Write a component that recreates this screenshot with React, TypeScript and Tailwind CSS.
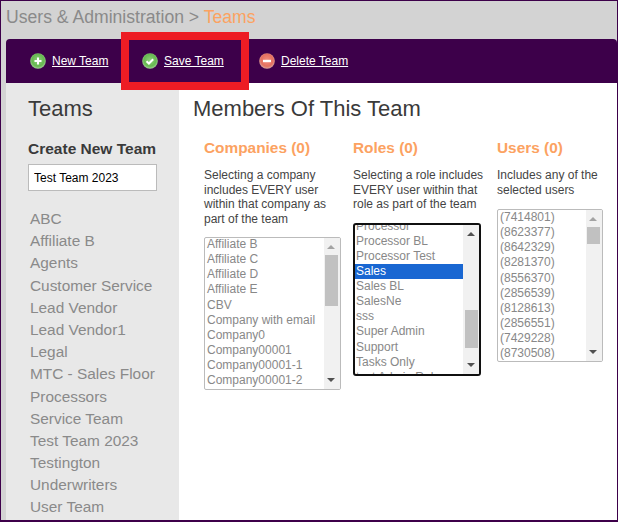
const font = "font-['Liberation_Sans',Arial,sans-serif]";

const teams = ["ABC", "Affiliate B", "Agents", "Customer Service", "Lead Vendor", "Lead Vendor1", "Legal", "MTC - Sales Floor", "Processors", "Service Team", "Test Team 2023", "Testington", "Underwriters", "User Team"];
const companies = ["Affiliate B", "Affiliate C", "Affiliate D", "Affiliate E", "CBV", "Company with email", "Company0", "Company00001", "Company00001-1", "Company00001-2"];
const roles = ["Processor", "Processor BL", "Processor Test", "Sales", "Sales BL", "SalesNe", "sss", "Super Admin", "Support", "Tasks Only", "test Admin Role"];
const users = ["(7414801)", "(8623377)", "(8642329)", "(8281370)", "(8556370)", "(2856539)", "(8128613)", "(2856551)", "(7429228)", "(8730508)"];

function ActionIcon({ kind }: { kind: "plus" | "check" | "minus" }) {
  const red = kind === "minus";
  return (
    <svg width="16" height="16" viewBox="0 0 16 16" className="shrink-0">
      <defs>
        <radialGradient id={`glow-${kind}`} cx="50%" cy="45%" r="55%">
          <stop offset="0%" stopColor={red ? "#f2907f" : "#8fd07c"} />
          <stop offset="70%" stopColor={red ? "#e4705f" : "#66b850"} />
          <stop offset="100%" stopColor={red ? "#d9a79f" : "#a4cf99"} />
        </radialGradient>
      </defs>
      <circle cx="8" cy="8" r="7.8" fill={`url(#glow-${kind})`} />
      {kind === "plus" && <path d="M8 4.5v7M4.5 8h7" stroke="#fff" strokeWidth="2" />}
      {kind === "check" && <path d="M4.5 8.3l2.4 2.2 4.3-4.3" stroke="#fff" strokeWidth="2" fill="none" />}
      {kind === "minus" && <path d="M4 8h8" stroke="#fff" strokeWidth="2.4" />}
    </svg>
  );
}

function ActionLink({ kind, label }: { kind: "plus" | "check" | "minus"; label: string }) {
  return (
    <a className="flex items-center gap-[6px] text-[12px] text-white underline cursor-pointer">
      <ActionIcon kind={kind} />
      {label}
    </a>
  );
}

function ListBox({ items, selected, thumbTop, thumbHeight, focused, listClass, className }: {
  items: string[];
  selected?: string;
  thumbTop: number;
  thumbHeight: number;
  focused?: boolean;
  listClass?: string;
  className: string;
}) {
  return (
    <div className={`flex overflow-hidden bg-white ${focused ? "border-2 border-[#101010] rounded-[3px]" : "border border-[#bbbbbb] rounded-[2px]"} ${className}`}>
      <div className={`flex-1 min-w-0 overflow-hidden ${listClass ?? ""}`}>
        {items.map((item) => (
          <div key={item} className={`h-[15.15px] leading-[15px] text-[12px] whitespace-nowrap ${focused ? "pl-[1px]" : "pl-[2px]"} ${item === selected ? "bg-[#1967d2] text-white" : "text-[#888888]"}`}>
            {item}
          </div>
        ))}
      </div>
      <div className="w-[16px] shrink-0 bg-[#f1f1f1] relative">
        <div className={`absolute top-[7px] w-0 h-0 border-x-[4px] border-x-transparent border-b-[4px] ${focused ? "left-[4px] border-b-[#505050]" : "left-[3px] border-b-[#a3a3a3]"}`} />
        <div className={`absolute w-[13px] bg-[#c1c1c1] ${focused ? "left-[2px]" : "left-[1px]"}`} style={{ top: thumbTop, height: thumbHeight }} />
        <div className={`absolute bottom-[7px] w-0 h-0 border-x-[4px] border-x-transparent border-t-[4px] border-t-[#505050] ${focused ? "left-[4px]" : "left-[3px]"}`} />
      </div>
    </div>
  );
}

export default function App() {
  return (
    <div className={`${font} h-[522px] w-[618px] overflow-hidden bg-[#d3d3d3] border border-b-2 border-[#3d004a] pl-[5px]`}>
      <h2 className="h-[38px] pt-[6px] text-[17.6px] leading-[20px] text-[#8a8a8a]">
        Users &amp; Administration &gt; <span className="text-[#fca261]">Teams</span>
      </h2>
      <div className="h-[44px] rounded-t-[4px] bg-[#3d004a] flex items-center pl-[24px]">
        <div className="w-[91px]"><ActionLink kind="plus" label="New Team" /></div>
        {/* highlight box hangs over the panel below */}
        <div className="relative z-10 w-[128px] h-[58px] shrink-0 border-[8px] border-[#ed1c24] flex items-center pl-[13px]">
          <ActionLink kind="check" label="Save Team" />
        </div>
        <div className="ml-[10px]"><ActionLink kind="minus" label="Delete Team" /></div>
      </div>
      <div className="flex h-[438px] bg-white">
        <aside className="w-[173px] shrink-0 bg-[#e8e8e8] pl-[22px]">
          <h1 className="mt-[13px] text-[22px] leading-[26px] text-[#3a3a3a]">Teams</h1>
          <h3 className="mt-[18px] text-[15.5px] leading-[18px] font-bold text-[#3a3a3a] whitespace-nowrap">Create New Team</h3>
          <input readOnly value="Test Team 2023" className="mt-[6px] w-[129px] h-[27px] px-[5px] border border-[#bbbbbb] bg-white text-[12px] text-black outline-none" />
          <ul className="mt-[17px] pl-[2px]">
            {teams.map((team) => (
              <li key={team} className="h-[22.2px] leading-[22px] text-[15.4px] text-[#8a8a8a] whitespace-nowrap">{team}</li>
            ))}
          </ul>
        </aside>
        <main className="flex-1 min-w-0 pl-[14px]">
          <h1 className="mt-[13px] text-[22px] leading-[26px] text-[#3a3a3a]">Members Of This Team</h1>
          <div className="flex mt-[17px] pl-[11px]">
            <section className="w-[149px] shrink-0">
              <h3 className="text-[15.4px] leading-[18px] font-bold text-[#fca261]">Companies (0)</h3>
              <p className="mt-[11px] text-[12px] leading-[14.5px] text-[#444444] w-[135px]">Selecting a company includes EVERY user within that company as part of the team</p>
              <ListBox items={companies} thumbTop={17} thumbHeight={51} listClass="-mt-[1px]" className="mt-[11px] w-[137px] h-[153px]" />
            </section>
            <section className="w-[144px] shrink-0">
              <h3 className="text-[15.4px] leading-[18px] font-bold text-[#fca261]">Roles (0)</h3>
              <p className="mt-[11px] text-[12px] leading-[14.5px] text-[#444444] whitespace-nowrap">Selecting a role includes<br />EVERY user within that<br />role as part of the team</p>
              <ListBox items={roles} selected="Sales" thumbTop={85} thumbHeight={38} focused listClass="-mt-[6.5px]" className="mt-[11.5px] w-[128px] h-[153px]" />
            </section>
            <section className="flex-1 min-w-0">
              <h3 className="text-[15.4px] leading-[18px] font-bold text-[#fca261]">Users (0)</h3>
              <p className="mt-[11px] text-[12px] leading-[14.5px] text-[#444444] whitespace-nowrap">Includes any of the<br />selected users</p>
              <ListBox items={users} thumbTop={17} thumbHeight={17} className="mt-[12px] w-[106px] h-[153px]" />
            </section>
          </div>
        </main>
      </div>
    </div>
  );
}
